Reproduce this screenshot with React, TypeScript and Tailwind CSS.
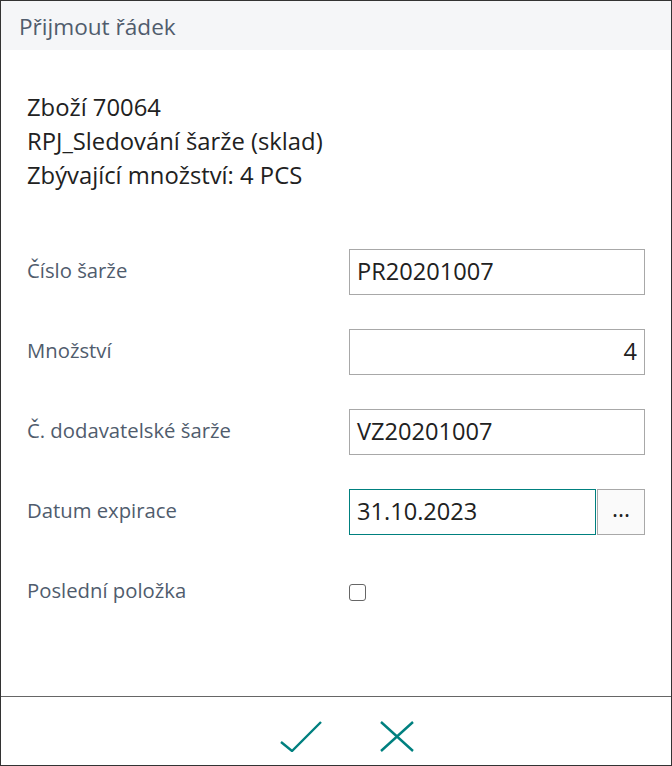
import React from "react";

const font = { fontFamily: '"Open Sans", "Noto Sans", sans-serif' };

function Row({ label, children }: { label: string; children: React.ReactNode }) {
  return (
    <div className="flex items-center h-[46px] mb-[34px]">
      <div className="w-[348px] text-[20.3px] text-[#505c6d] pl-[26px] pb-[3px]">{label}</div>
      <div className="w-[296px] flex">{children}</div>
    </div>
  );
}

function Field({ value, right, focus }: { value: string; right?: boolean; focus?: boolean }) {
  return (
    <div
      className={
        "h-[46px] flex-1 flex items-center px-[7px] text-[23.6px] text-[#212121] bg-white border " +
        (focus ? "border-[#00807f]" : "border-[#a8a8a8]") +
        (right ? " justify-end" : "")
      }
    >
      {value}
    </div>
  );
}

export default function App() {
  return (
    <div style={font} className="w-[672px] h-[766px] border border-[#333] flex flex-col bg-white">
      <div className="h-[49px] bg-[#f5f6f8] flex items-end pb-[6px] pl-[18px] text-[22.6px] text-[#505c6d]">
        Přijmout řádek
      </div>
      <div className="flex-1">
        <div className="pl-[26px] pt-[40px] text-[23.8px] leading-[34px] text-[#212121]">
          <div>Zboží 70064</div>
          <div>RPJ_Sledování šarže (sklad)</div>
          <div>Zbývající množství: 4 PCS</div>
        </div>
        <div className="pt-[57px]">
          <Row label="Číslo šarže">
            <Field value="PR20201007" />
          </Row>
          <Row label="Množství">
            <Field value="4" right />
          </Row>
          <Row label="Č. dodavatelské šarže">
            <Field value="VZ20201007" />
          </Row>
          <Row label="Datum expirace">
            <Field value="31.10.2023" focus />
            <div className="ml-[1px] w-[48px] h-[46px] border border-[#a8a8a8] bg-[#fafafa] flex items-center justify-center text-[23px] text-[#212121] pb-[8px]">
              ...
            </div>
          </Row>
          <Row label="Poslední položka">
            <div className="w-[17px] h-[17px] border border-[#666] rounded-[3px] bg-white mt-[1px]" />
          </Row>
        </div>
      </div>
      <div className="h-[69px] border-t border-[#666] flex items-center justify-center gap-[58px] pl-[22px] pt-[10px]">
        <svg width="42" height="31" viewBox="0 0 42 31" fill="none" stroke="#00807f" strokeWidth="2.4">
          <path d="M1 21 L12 30 L41 1" />
        </svg>
        <svg width="34" height="31" viewBox="0 0 34 31" fill="none" stroke="#00807f" strokeWidth="2.4">
          <path d="M1 1 L33 30 M33 1 L1 30" />
        </svg>
      </div>
    </div>
  );
}
